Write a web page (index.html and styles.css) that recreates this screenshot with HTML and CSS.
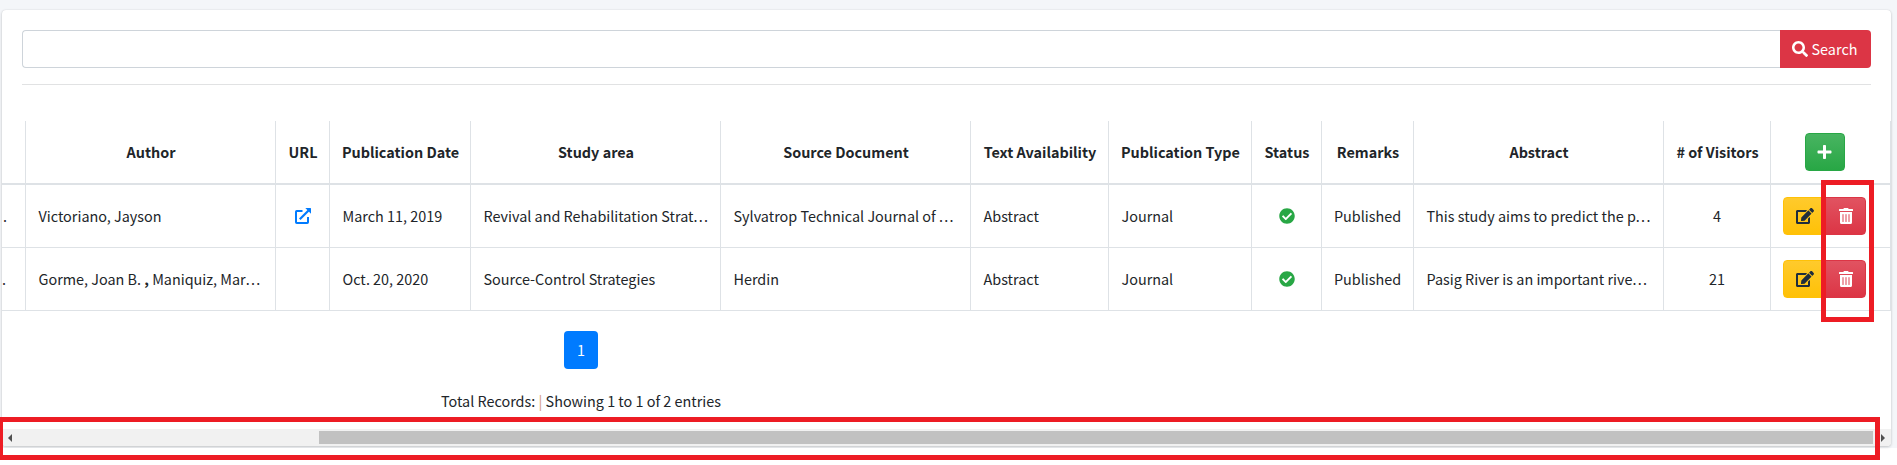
FILE: index.html
```
<!DOCTYPE html>
<html lang="en">
<head>
<meta charset="utf-8">
<title>Publications</title>
<link rel="stylesheet" href="styles.css">
</head>
<body>
<svg class="sprite" aria-hidden="true">
  <symbol id="search" viewBox="0 0 512 512"><path d="M505 442.700 405.300 343c-4.500-4.500-10.600-7-17-7H372c27.600-35.300 44-79.700 44-128C416 93.100 322.900 0 208 0S0 93.100 0 208s93.100 208 208 208c48.300 0 92.700-16.400 128-44v16.300c0 6.400 2.500 12.500 7 17l99.700 99.700c9.400 9.400 24.600 9.400 33.900 0l28.300-28.300c9.400-9.400 9.400-24.600.1-34zM208 336c-70.700 0-128-57.200-128-128 0-70.700 57.200-128 128-128 70.700 0 128 57.200 128 128 0 70.700-57.200 128-128 128z"/></symbol>
  <symbol id="plus" viewBox="0 0 448 512"><path d="M416 208H272V64c0-17.700-14.300-32-32-32h-32c-17.700 0-32 14.300-32 32v144H32c-17.700 0-32 14.300-32 32v32c0 17.700 14.300 32 32 32h144v144c0 17.700 14.300 32 32 32h32c17.700 0 32-14.300 32-32V304h144c17.700 0 32-14.300 32-32v-32c0-17.700-14.300-32-32-32z"/></symbol>
  <symbol id="check" viewBox="0 0 512 512"><path d="M504 256c0 137-111 248-248 248S8 393 8 256 119 8 256 8s248 111 248 248zM227.300 387.300l184-184c6.200-6.200 6.200-16.400 0-22.600l-22.600-22.600c-6.200-6.200-16.400-6.200-22.600 0L216 308.100l-70.100-70.100c-6.200-6.200-16.400-6.200-22.600 0l-22.600 22.600c-6.200 6.200-6.200 16.400 0 22.600l104 104c6.200 6.300 16.400 6.300 22.600.1z"/></symbol>
  <symbol id="edit" viewBox="0 0 576 512"><path d="M402.600 83.200l90.200 90.200c3.800 3.800 3.800 10 0 13.800L274.400 405.600l-92.800 10.300c-12.400 1.400-22.900-9.100-21.500-21.500l10.300-92.800L388.800 83.200c3.800-3.800 10-3.800 13.800 0zm162-22.900l-48.800-48.800c-15.200-15.200-39.900-15.200-55.200 0l-35.400 35.400c-3.800 3.800-3.800 10 0 13.800l90.200 90.200c3.800 3.800 10 3.800 13.800 0l35.400-35.400c15.200-15.300 15.200-40 0-55.200zM384 346.200V448H64V128h229.800c3.200 0 6.200-1.300 8.500-3.500l40-40c7.600-7.600 2.200-20.500-8.500-20.500H48C21.500 64 0 85.500 0 112v352c0 26.500 21.500 48 48 48h352c26.500 0 48-21.500 48-48V306.200c0-10.700-12.900-16-20.500-8.500l-40 40c-2.200 2.300-3.500 5.300-3.500 8.500z"/></symbol>
  <symbol id="trash" viewBox="0 0 448 512"><path d="M32 464a48 48 0 0 0 48 48h288a48 48 0 0 0 48-48V128H32zm272-256a16 16 0 0 1 32 0v224a16 16 0 0 1-32 0zm-96 0a16 16 0 0 1 32 0v224a16 16 0 0 1-32 0zm-96 0a16 16 0 0 1 32 0v224a16 16 0 0 1-32 0zM432 32H312l-9.400-18.700A24 24 0 0 0 281.100 0H166.800a23.700 23.700 0 0 0-21.400 13.300L136 32H16A16 16 0 0 0 0 48v32a16 16 0 0 0 16 16h416a16 16 0 0 0 16-16V48a16 16 0 0 0-16-16z"/></symbol>
  <symbol id="link" viewBox="0 0 16 16"><path d="M7.500 3H1.800A.8.800 0 0 0 1 3.800v10.400a.8.800 0 0 0 .8.800h10.400a.8.800 0 0 0 .8-.8V9" fill="none" stroke="currentColor" stroke-width="2"/><path d="M4.800 11.200 13.500 2.500" stroke="currentColor" stroke-width="2.200"/><path d="M10.300 0h5.200a.5.500 0 0 1 .5.500v5.200z"/></symbol>
</svg>

<main class="card">
  <form class="search">
    <input class="search-input" type="text" aria-label="Search">
    <button class="search-btn" type="button"><svg class="icon"><use href="#search"/></svg>Search</button>
  </form>
  <hr class="rule">
  <table class="records">
    <colgroup>
      <col class="w-title"><col class="w-long"><col class="w-url"><col class="w-date"><col class="w-long"><col class="w-long"><col class="w-text"><col class="w-type"><col class="w-status"><col class="w-remarks"><col class="w-long"><col class="w-visitors"><col class="w-actions">
    </colgroup>
    <thead>
      <tr><th></th><th>Author</th><th>URL</th><th>Publication Date</th><th>Study area</th><th>Source Document</th><th>Text Availability</th><th>Publication Type</th><th>Status</th><th>Remarks</th><th>Abstract</th><th># of Visitors</th><th><button class="btn add" type="button" aria-label="Add"><svg class="icon plus"><use href="#plus"/></svg></button></th></tr>
    </thead>
    <tbody>
      <tr>
        <td class="tail">.</td><td>Victoriano, Jayson</td><td class="mid"><svg class="icon link"><use href="#link"/></svg></td><td>March 11, 2019</td><td>Revival and Rehabilitation Strat<span class="dots">...</span></td><td>Sylvatrop Technical Journal of <span class="dots">...</span></td><td>Abstract</td><td>Journal</td><td class="mid"><svg class="icon ok"><use href="#check"/></svg></td><td class="mid">Published</td><td>This study aims to predict the p<span class="dots">...</span></td><td class="mid">4</td>
        <td><div class="group"><button class="btn edit" type="button" aria-label="Edit"><svg class="icon pen"><use href="#edit"/></svg></button><button class="btn delete" type="button" aria-label="Delete"><svg class="icon bin"><use href="#trash"/></svg></button></div></td>
      </tr>
      <tr>
        <td class="tail tail-near">.</td><td>Gorme, Joan B. <b>,</b> Maniquiz, Mar<span class="dots">...</span></td><td></td><td>Oct. 20, 2020</td><td>Source-Control Strategies</td><td>Herdin</td><td>Abstract</td><td>Journal</td><td class="mid"><svg class="icon ok"><use href="#check"/></svg></td><td class="mid">Published</td><td>Pasig River is an important rive<span class="dots">...</span></td><td class="mid">21</td>
        <td><div class="group"><button class="btn edit" type="button" aria-label="Edit"><svg class="icon pen"><use href="#edit"/></svg></button><button class="btn delete" type="button" aria-label="Delete"><svg class="icon bin"><use href="#trash"/></svg></button></div></td>
      </tr>
    </tbody>
  </table>
  <div class="pager">
    <span class="page">1</span>
    <p class="summary">Total Records: <span class="bar">|</span> Showing 1 to 1 of 2 entries</p>
  </div>
  <div class="scrollbar"><i class="arrow left"></i><div class="thumb"></div><i class="arrow right"></i></div>
</main>
<div class="mark mark-delete"></div>
<div class="mark mark-scroll"></div>
</body>
</html>
```
FILE: styles.css
```
* { box-sizing: border-box; }
html { background: #fff; }
body {
  margin: 0;
  height: 465px;
  overflow: hidden;
  position: relative;
  padding: 10px 6px 0 2px;
  background: linear-gradient(#f4f6f9, #f4f6f9) 0 0 / 100% 448px no-repeat #fff;
  font-family: "Source Sans Pro", "Noto Sans CJK SC", sans-serif;
  font-size: 14.4px;
  line-height: 24px;
  color: #212529;
}
.sprite { display: none; }
.icon { width: 16px; height: 16px; fill: currentColor; display: block; }

.card {
  width: 1889px;
  height: 436px;
  background: #fff;
  border-radius: 4px;
  box-shadow: 0 0 1px rgba(0, 0, 0, .125), 0 1px 3px rgba(0, 0, 0, .2);
  overflow: hidden;
  display: flex;
  flex-direction: column;
}
.search { display: flex; height: 38px; margin: 20px 20px 0; flex: none; }
.search-input {
  flex: 1;
  border: 1px solid #ced4da;
  border-right: 0;
  border-radius: 4px 0 0 4px;
  background: #fff;
}
.search-btn {
  width: 91px;
  padding: 0 2px 0 0;
  display: flex;
  align-items: center;
  justify-content: center;
  gap: 4px;
  border: 0;
  border-radius: 0 4px 4px 0;
  background: #dc3545;
  color: #fff;
  font: inherit;
}
.rule { width: 1849px; margin: 16px 20px 36px; border: 0; border-top: 1px solid #e1e2e3; flex: none; }

.records { width: 1889px; table-layout: fixed; border-collapse: separate; border-spacing: 0; flex: none; }
.w-title { width: 23px; }
.w-long { width: 250px; }
.w-url { width: 54px; }
.w-date { width: 141px; }
.w-text { width: 138px; }
.w-type { width: 143px; }
.w-status { width: 70px; }
.w-remarks { width: 92px; }
.w-visitors { width: 107px; }
.w-actions { width: 121px; }
.records th, .records td {
  padding: 0 0 0 12.500px;
  border-left: 1px solid #dee2e6;
  border-bottom: 1px solid #dee2e6;
  height: 63px;
  white-space: nowrap;
  text-align: left;
  vertical-align: middle;
}
.records th { height: 64px; padding: 0 0 0 1px; text-align: center; font-weight: 700; border-bottom-width: 2px; }
.records th:first-child, .records td:first-child { border-left: 0; }
.records th:last-child, .records td:last-child { border-right: 1px solid #dee2e6; }
.records th:last-child { padding: 0; }
.records td:last-child { padding-left: 12px; }
.records .mid { padding: 0; text-align: center; }
.records .tail { padding: 0 0 0 1px; }
.records .tail-near { padding-left: 0; }
.mid .icon { margin: 0 auto; }
.dots { letter-spacing: 1.300px; }
.link { color: #007bff; }
.ok { color: #28a745; }

.group { display: flex; }
.btn {
  height: 38px;
  padding: 0;
  display: flex;
  align-items: center;
  justify-content: center;
  border: 1px solid;
  border-radius: 4px;
}
.add {
  width: 40px;
  margin: 0 0 0 34px;
  padding-right: 1px;
  color: #fff;
  border-color: #28a745;
  background: linear-gradient(#48b461, #28a745);
}
.edit {
  width: 43px;
  color: #1f2d3d;
  border-color: #ffc107;
  border-radius: 4px 0 0 4px;
  background: linear-gradient(#ffca2c, #ffc107);
}
.delete {
  width: 41px;
  margin-left: -1px;
  color: #fff;
  border-color: #dc3545;
  border-radius: 0 4px 4px 0;
  background: linear-gradient(#e15361, #dc3545);
}
.plus { width: 15px; }
.pen { width: 18px; }
.bin { width: 14px; }

.pager { width: 1158px; display: flex; flex-direction: column; align-items: center; padding-top: 20px; flex: none; }
.page {
  width: 34px;
  height: 38px;
  line-height: 38px;
  text-align: center;
  border-radius: 4px;
  background: #007bff;
  color: #fff;
}
.summary { margin: 20px 0 0; white-space: nowrap; }
.bar { color: #d39a7d; }

.scrollbar {
  height: 17px;
  margin-top: auto;
  padding: 0 6px;
  display: flex;
  align-items: center;
  background: #f1f1f1;
  flex: none;
}
.thumb { width: 1554px; height: 13px; margin: 0 8px 0 auto; background: #c1c1c1; }
.arrow { width: 0; height: 0; border: 4px solid transparent; }
.left { border-left: 0; border-right-color: #505050; }
.right { border-right: 0; border-left-color: #505050; }

/* Highlight frames drawn over the page */
.mark { position: absolute; border: 5px solid #ed1c24; }
.mark-delete { left: 1821px; top: 180px; width: 53px; height: 142px; }
.mark-scroll { left: -2px; top: 417px; width: 1882px; height: 43px; background: linear-gradient(#fff, #fff) 0 100% / 100% 7px no-repeat; }
```
